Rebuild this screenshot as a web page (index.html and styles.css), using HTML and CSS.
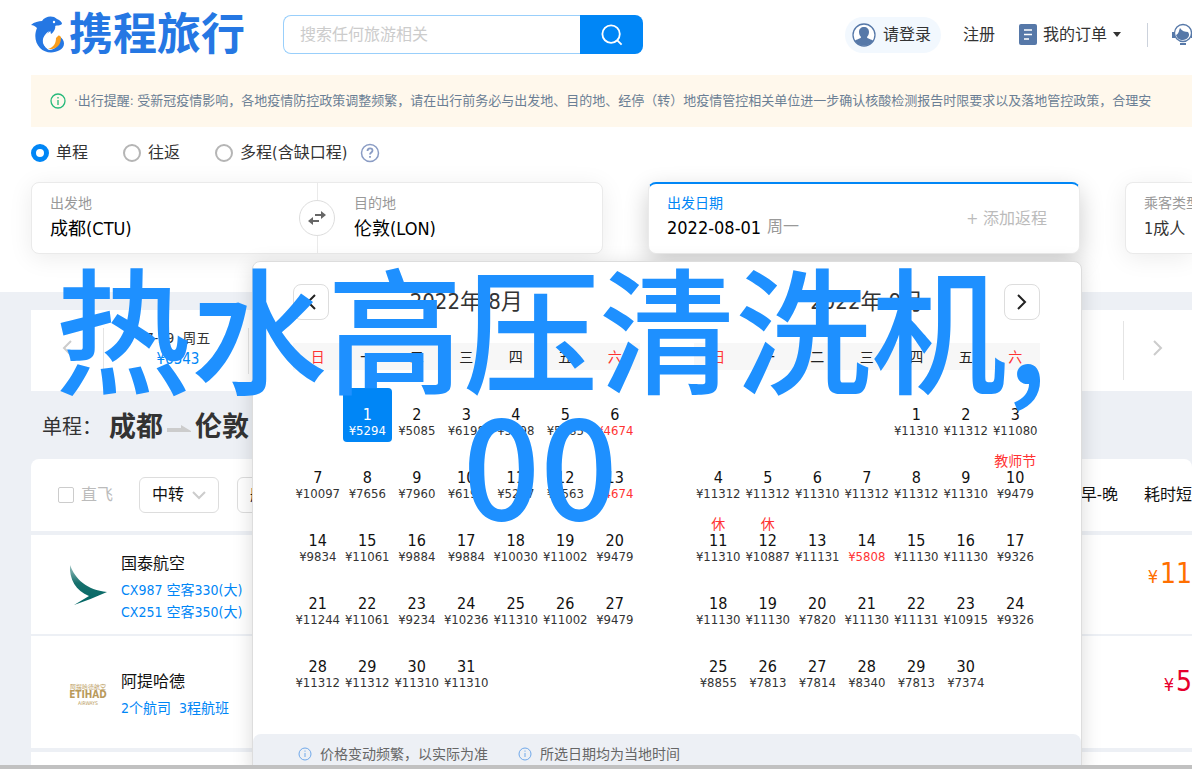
FILE: index.html
```html
<!DOCTYPE html>
<html lang="zh-CN">
<head>
<meta charset="utf-8">
<title>携程旅行</title>
<link rel="stylesheet" href="styles.css">
</head>
<body>
<div class="top">
  <header class="header">
    <a class="logo" href="#">
      <svg class="logo-mark" viewBox="0 0 33 37" aria-hidden="true">
        <path fill="#2577e3" d="M0 9C3 6 8 5 11 5C14 0 22-1 26 3C29 4 31 6 31 8C29 10 26 9 24 10C22 14 17 16 14 20C10 25 13 31 18 34C24 34 29 29 28 20C35 24 34 31 29 34C22 38 14 37 9 32C4 27 3 19 6 12C4 10 2 9 0 9Z"/>
        <path fill="#fff" d="M18 15C11 20 9 28 17 33C20 34 23 33 24 31C17 32 13 26 15 20Z"/>
        <path fill="#2577e3" d="M24 9C25 12 23 16 20 18L19 14Z"/>
        <path fill="#f99d1c" d="M27 20C28 19 30 20 30 22C30 30 24 34 17 33C23 31 25 27 25 22Z"/>
        <circle cx="23" cy="6" r="1.2" fill="#fff"/>
      </svg>
      <span class="logo-text">携程旅行</span>
    </a>
    <form class="search">
      <input class="search-input" type="text" placeholder="搜索任何旅游相关" aria-label="搜索">
      <button class="search-btn" type="button" aria-label="搜索">
        <svg width="22" height="22" viewBox="0 0 24 24" fill="none" stroke="#fff" stroke-width="2"><circle cx="11" cy="11" r="9.500"/><path d="M17.500 17.500l5 5"/></svg>
      </button>
    </form>
    <nav class="nav">
      <a class="login" href="#">
        <svg width="24" height="24" viewBox="0 0 24 24"><circle cx="12" cy="12" r="11" fill="#fff" stroke="#5678a8" stroke-width="1.3"/><path fill="#5678a8" d="M12 4c3 0 5 2 5 5 0 2-1 4-2 5 0 2 5 2 6 4-4 6-14 6-18 0 1-2 6-2 6-4-1-1-2-3-2-5 0-3 2-5 5-5z"/></svg>
        <span>请登录</span>
      </a>
      <a class="register" href="#">注册</a>
      <a class="orders" href="#">
        <svg width="18" height="21" viewBox="0 0 18 21"><rect width="18" height="21" rx="2" fill="#5678a8"/><path stroke="#fff" stroke-width="1.5" d="M5 6h8M5 10.500h8M5 15h5"/></svg>
        <span>我的订单</span><i class="caret"></i>
      </a>
      <a class="service" href="#" aria-label="客服">
        <svg width="24" height="24" viewBox="0 0 24 24"><circle cx="12" cy="10" r="8.500" fill="#fff" stroke="#5678a8" stroke-width="1.300"/><path fill="#5678a8" d="M5 12c3-1 3-5 4-7 2 3 5 4 8 4 3 4-1 8-5 8s-6-2-7-5zM1 9h3v6H1zM20 9h3v6h-3zM9 20h6v2H9z"/></svg>
      </a>
    </nav>
  </header>

  <div class="notice">
    <svg width="16" height="16" viewBox="0 0 16 16" fill="none" stroke="#26b97a" stroke-width="1.300"><circle cx="8" cy="8" r="7"/><path d="M8 7v5M8 4v1.500"/></svg>
    <p>·出行提醒: 受新冠疫情影响，各地疫情防控政策调整频繁，请在出行前务必与出发地、目的地、经停（转）地疫情管控相关单位进一步确认核酸检测报告时限要求以及落地管控政策，合理安</p>
  </div>

  <div class="trip-types">
    <label><input type="radio" name="trip" checked>单程</label>
    <label><input type="radio" name="trip">往返</label>
    <label><input type="radio" name="trip">多程(含缺口程)</label>
    <svg class="help" width="20" height="20" viewBox="0 0 20 20" fill="none" stroke="#8a9cc4" stroke-width="1.500"><circle cx="10" cy="10" r="8.500"/><path stroke-width="1.800" d="M7.500 8c0-3.500 5-3.500 5-.500 0 2-2.500 2-2.500 4M10 13v1.800"/></svg>
  </div>

  <div class="fields">
    <div class="card cities">
      <div class="field"><label for="from">出发地</label><input id="from" type="text" value="成都(CTU)"></div>
      <div class="field"><label for="to">目的地</label><input id="to" type="text" value="伦敦(LON)"></div>
      <button class="swap" type="button" aria-label="交换">
        <svg width="20" height="16" viewBox="0 0 20 16" fill="#666"><path d="M8 4h6V1l5 4-5 4V6H8zM12 12H6v3L1 11l5-4v3h6z"/></svg>
      </button>
    </div>
    <div class="card dates">
      <div class="field"><label for="depart">出发日期</label>
        <div class="date-line"><input id="depart" type="text" value="2022-08-01"><span class="weekday">周一</span></div>
      </div>
      <button class="add-return" type="button">+ 添加返程</button>
      <div class="popover">
        <div class="months">
          <section class="month">
            <div class="caption">
              <button class="turn" type="button" aria-label="上个月"><svg width="12" height="18" viewBox="0 0 12 18"><path d="M10 2L3 9l7 7"/></svg></button>
              <h2>2022年 8月</h2>
            </div>
            <table id="aug"></table>
          </section>
          <section class="month">
            <div class="caption">
              <h2>2022年 9月</h2>
              <button class="turn" type="button" aria-label="下个月"><svg width="12" height="18" viewBox="0 0 12 18"><path d="M2 2l7 7-7 7"/></svg></button>
            </div>
            <table id="sep"></table>
          </section>
        </div>
        <div class="tips">
          <span><svg width="14" height="14" viewBox="0 0 14 14"><circle cx="7" cy="7" r="6"/><path d="M7 6v4M7 3.500v1.200"/></svg>价格变动频繁，以实际为准</span>
          <span><svg width="14" height="14" viewBox="0 0 14 14"><circle cx="7" cy="7" r="6"/><path d="M7 6v4M7 3.500v1.200"/></svg>所选日期均为当地时间</span>
        </div>
      </div>
    </div>
    <div class="card travellers">
      <div class="field"><label for="people">乘客类型</label><input id="people" type="text" value="1成人"></div>
    </div>
  </div>
</div>

<main class="results">
  <div class="day-strip">
    <button type="button" aria-label="前一天"><svg width="12" height="18" viewBox="0 0 12 18"><path d="M10 2L3 9l7 7"/></svg></button>
    <div class="days">
      <a class="day-tab" href="#"><span>7-29 &nbsp;周五</span><b>¥6543</b></a>
      <a class="day-tab last" href="#"><span>8-4 &nbsp;周四</span></a>
    </div>
    <button type="button" aria-label="后一天"><svg width="12" height="18" viewBox="0 0 12 18"><path d="M2 2l7 7-7 7"/></svg></button>
  </div>

  <h1 class="route"><small>单程：</small>成都<svg width="24" height="8" viewBox="0 0 24 8"><path fill="#ccc" d="M0 3h14V0l10 6v1H0z"/></svg>伦敦</h1>

  <div class="filters">
    <label class="direct"><input type="checkbox">直飞</label>
    <button class="pick" type="button">中转<svg width="14" height="9" viewBox="0 0 14 9"><path d="M1 1l6 6 6-6"/></svg></button>
    <button class="pick" type="button">航司</button>
    <div class="sorts"><button type="button">起飞早-晚</button><button type="button">耗时短</button></div>
  </div>

  <article class="flight">
    <div class="airline-logo">
      <svg width="38" height="42" viewBox="0 0 38 42"><defs><linearGradient id="wing" x2="0" y2="1"><stop offset="0" stop-color="#9fc4c3"/><stop offset=".45" stop-color="#17706d"/><stop offset="1" stop-color="#006564"/></linearGradient></defs><path fill="url(#wing)" d="M1 1C6 15 18 26 38 28C27 33 16 37 5 41L20 32C7 27 0 15 1 1Z"/></svg>
    </div>
    <div class="info"><h3>国泰航空</h3><p>CX987 空客330(大)</p><p>CX251 空客350(大)</p></div>
    <div class="price"><small>¥</small>11</div>
  </article>
  <article class="flight tall">
    <div class="airline-logo etihad"><span>阿提哈德航空</span><b>ETIHAD</b><i>AIRWAYS</i></div>
    <div class="info"><h3>阿提哈德</h3><p>2个航司 &nbsp;3程航班</p></div>
    <div class="price low"><small>¥</small>5</div>
  </article>
  <article class="flight next"></article>
</main>
<div class="page-edge"></div>
<div class="headline"><div>热水高压清洗机,</div><div class="second">00</div></div>
<script src="calendar.js"></script>
</body>
</html>
```
FILE: styles.css
```css
* { box-sizing: border-box; }
body {
  margin: 0;
  height: 100vh;
  overflow: hidden;
  position: relative;
  background: #edf0f5;
  color: #333;
  font: 16px/20px "DejaVu Sans Condensed", "Noto Sans CJK SC", sans-serif;
}
a { color: inherit; text-decoration: none; }
button, input { font: inherit; color: inherit; }
button { background: none; border: 0; padding: 0; }
h1, h2, h3, p { margin: 0; font-weight: 400; }
svg { flex: none; }

.top { background: #fff; padding: 15px 0 38px 31px; }
.header { display: flex; align-items: center; height: 39px; white-space: nowrap; }
.logo { display: flex; align-items: center; gap: 5px; width: 252px; color: #2577e3; }
.logo-mark { width: 33px; height: 37px; }
.logo-text { font-size: 44px; line-height: 39px; font-weight: 700; }
.search { display: flex; width: 360px; height: 39px; }
.search-input {
  flex: 1; min-width: 0; padding: 0 16px;
  border: 1px solid #99cffb; border-right: 0; border-radius: 8px 0 0 8px;
}
.search-input::placeholder { color: #ccc; }
.search-btn {
  width: 63px; display: grid; place-items: center;
  background: #0086f6; border-radius: 0 8px 8px 0;
}
.nav { display: flex; align-items: center; margin-left: auto; margin-right: -3px; }
.login {
  display: flex; align-items: center; gap: 7px;
  height: 36px; padding: 0 10px 0 7px; border-radius: 18px; background: #f2f8fe;
}
.register { margin: 0 24px 0 22px; }
.orders { display: flex; align-items: center; gap: 6px; }
.caret { border: 4px solid transparent; border-top: 5px solid #333; border-bottom: 0; }
.service { display: flex; margin-left: 26px; padding-left: 23px; border-left: 1px solid #ccd2dc; }

.notice {
  display: flex; align-items: center; gap: 8px;
  height: 52px; margin-top: 21px; padding-left: 19px;
  background: #fff8ec; color: #6b7f95; font-size: 13px;
  overflow: hidden; white-space: nowrap;
}

.trip-types { display: flex; align-items: center; height: 55px; padding-bottom: 3px; }
.trip-types label { display: flex; align-items: center; gap: 7px; margin-right: 35px; }
.trip-types input {
  appearance: none; width: 18px; height: 18px; margin: 0;
  border: 2px solid #b5b5b5; border-radius: 50%;
}
.trip-types input:checked { border: 5px solid #0086f6; }
.help { margin-left: -22px; }

.fields { display: grid; grid-template-columns: 572fr 432fr 67px; gap: 45px; }
.card {
  position: relative; display: flex; height: 72px;
  border: 1px solid #eaeaea; border-radius: 8px; background: #fff;
  box-shadow: 0 4px 24px rgba(0, 0, 0, .08);
}
.field { flex: 1; min-width: 0; padding: 10px 0 0 18px; }
.field label { display: block; color: #999; font-size: 14px; line-height: 20px; }
.field input {
  display: block; width: 140px; height: 24px; margin-top: 2px;
  border: 0; padding: 0; background: none; color: #000; font-size: 18px;
}
.cities { display: grid; grid-template-columns: 1fr 1fr; }
.cities .field + .field { padding-left: 36px; border-left: 1px solid #eaeaea; }
.swap {
  position: absolute; left: calc(50% - 18px); top: 17px;
  width: 36px; height: 36px; display: grid; place-items: center;
  border: 1px solid #ddd; border-radius: 50%; background: #fff;
}
.dates {
  z-index: 2; border-top: 2px solid #0086f6;
  box-shadow: 0 8px 24px rgba(0, 0, 0, .2);
}
.dates .field { padding-top: 9px; }
.dates .field label { color: #0086f6; }
.date-line { display: flex; gap: 4px; align-items: center; }
.dates .field input { width: 96px; }
.weekday { color: #999; padding-top: 2px; }
.add-return { padding-right: 32px; color: #bbb; }
.travellers { border-right: 0; border-radius: 8px 0 0 8px; overflow: hidden; }
.travellers .field label { white-space: nowrap; }
.travellers .field input { width: 60px; font-size: 16px; color: #333; }

.popover {
  position: absolute; top: 77px; right: -3px; width: 830px;
  border: 1px solid #ddd; border-radius: 8px; background: #fff;
  box-shadow: 0 4px 20px rgba(0, 0, 0, .15);
}
.months { display: grid; grid-template-columns: 1fr 1fr; gap: 54px; padding: 22px 41px 40px 40px; }
.caption { position: relative; display: flex; align-items: center; height: 36px; }
.caption h2 { flex: 1; text-align: center; font-size: 22px; }
.turn {
  width: 36px; height: 36px; display: grid; place-items: center;
  border: 1px solid #ddd; border-radius: 8px;
}
.turn:first-child { margin-right: -36px; }
.turn:last-child { margin-left: -36px; }
.turn path { fill: none; stroke: #222; stroke-width: 2; }
table { width: 100%; margin-top: 23px; table-layout: fixed; border-collapse: collapse; }
thead { background: #f7f7f7; }
th { height: 27px; padding: 0; font-size: 14px; font-weight: 400; color: #222; }
th:first-child, th:last-child { color: #f33; }
td { padding: 9px 0 0; }
tbody tr:first-child td { padding-top: 18px; }
.day { display: block; width: 100%; height: 54px; border-radius: 4px; white-space: nowrap; }
.day span { display: block; }
.day .mark { height: 18px; font-size: 14px; line-height: 20px; color: #f33; }
.day .num { height: 18px; line-height: 18px; color: #111; }
.day .fare { height: 18px; font-size: 13px; line-height: 14px; }
.day .cheap { color: #f33; }
.chosen, .chosen .num { background: #0086f6; color: #fff; }
.tips {
  display: flex; gap: 30px; height: 40px; padding-left: 45px;
  border-radius: 8px 8px 0 0; background: #edf0f5; color: #666; font-size: 14px;
}
.tips span { display: flex; align-items: center; gap: 8px; }
.tips svg { fill: none; stroke: #6fa8ea; }

.results { padding: 18px 0 0 31px; }
.day-strip { display: grid; grid-template-columns: 72px 1fr 68px; height: 81px; background: #fff; }
.day-strip path { fill: none; stroke: #ccc; stroke-width: 2; }
.days { display: flex; justify-content: space-between; align-items: center; border-right: 1px solid #e4e4e4; margin: 11px 0; }
.day-tab {
  width: 146px; height: 46px; padding-left: 4px; text-align: center; font-size: 14px;
  border: 1px solid #e4e4e4; border-width: 0 1px;
}
.day-tab span, .day-tab b { display: block; line-height: 21px; }
.day-tab b { color: #0086f6; font-size: 15px; font-weight: 400; }
.last { border: 0; }
.route { display: flex; align-items: center; height: 68px; padding: 4px 0 0 11px; font-size: 27px; font-weight: 700; }
.route small { width: 67px; font-size: 20px; font-weight: 400; white-space: nowrap; }
.route svg { margin: 4px 4px 0; }
.filters {
  display: flex; align-items: center; height: 72px; padding-left: 27px;
  border-radius: 8px 8px 0 0; background: #fff; color: #111; white-space: nowrap;
}
.direct { display: flex; align-items: center; gap: 7px; margin-right: 8px; color: #bbb; }
.direct input { appearance: none; width: 16px; height: 16px; margin: 0; border: 1px solid #ccc; border-radius: 2px; }
.pick {
  display: flex; align-items: center; gap: 8px; height: 36px;
  margin-left: 18px; padding: 0 12px; border: 1px solid #ddd; border-radius: 6px;
}
.pick path { fill: none; stroke: #ccc; stroke-width: 2; }
.sorts { display: flex; gap: 26px; margin-left: auto; }
.flight { display: flex; align-items: center; height: 99px; margin-top: 4px; padding-top: 6px; background: #fff; }
.tall { height: 112px; margin-top: 2px; }
.next { height: 40px; }
.airline-logo { width: 78px; margin-right: 12px; padding-left: 38px; }
.etihad { display: flex; flex-direction: column; align-items: center; width: 78px; padding-left: 36px; color: #b99a5b; line-height: 8px; }
.etihad span { font-size: 6px; white-space: nowrap; }
.etihad b { font-size: 10px; }
.etihad i { font-size: 5px; font-style: normal; }
.info h3 { color: #111; font-size: 16px; line-height: 22px; margin-bottom: 4px; }
.info p { color: #0086f6; font-size: 14px; line-height: 22px; }
.price { margin-left: auto; padding-bottom: 24px; font-size: 28px; color: #ff6f00; }
.price small { margin-right: 2px; font-size: 18px; }
.low { color: #e6002d; }

.page-edge { position: absolute; z-index: 3; left: 0; right: 0; bottom: 0; height: 4px; background: #c1c1c1; }
.headline {
  position: absolute; z-index: 4; left: 55px; top: 257px;
  font: 500 136px/136px "Noto Sans CJK SC", sans-serif;
  color: #1e90ff; text-align: center; white-space: nowrap; pointer-events: none;
}
.second { padding-right: 22px; }
```
FILE: calendar.js
```js
const months = {
  aug: { start: 1, chosen: 1, marks: {}, fares: [5294, 5085, 6198, 5298, 5785, 4674, 10097, 7656, 7960, 6198, 5297, 5563, 4674, 9834, 11061, 9884, 9884, 10030, 11002, 9479, 11244, 11061, 9234, 10236, 11310, 11002, 9479, 11312, 11312, 11310, 11310] },
  sep: { start: 4, marks: { 10: "教师节", 11: "休", 12: "休" }, fares: [11310, 11312, 11080, 11312, 11312, 11310, 11312, 11312, 11310, 9479, 11310, 10887, 11131, 5808, 11130, 11130, 9326, 11130, 11130, 7820, 11130, 11131, 10915, 9326, 8855, 7813, 7814, 8340, 7813, 7374] }
};
const cheap = { aug: 4674, sep: 5808 };

for (const [id, m] of Object.entries(months)) {
  let html = "<thead><tr>" + [..."日一二三四五六"].map(d => `<th>${d}</th>`).join("") + "</tr></thead><tbody>";
  for (let row = 0; row < 5; row++) {
    html += "<tr>";
    for (let col = 0; col < 7; col++) {
      const n = row * 7 + col - m.start + 1;
      const fare = m.fares[n - 1];
      html += fare
        ? `<td><button type="button" class="day${n === m.chosen ? " chosen" : ""}"><span class="mark">${m.marks[n] || ""}</span><span class="num">${n}</span><span class="fare${fare === cheap[id] ? " cheap" : ""}">¥${fare}</span></button></td>`
        : "<td></td>";
    }
    html += "</tr>";
  }
  document.getElementById(id).innerHTML = html + "</tbody>";
}
```
